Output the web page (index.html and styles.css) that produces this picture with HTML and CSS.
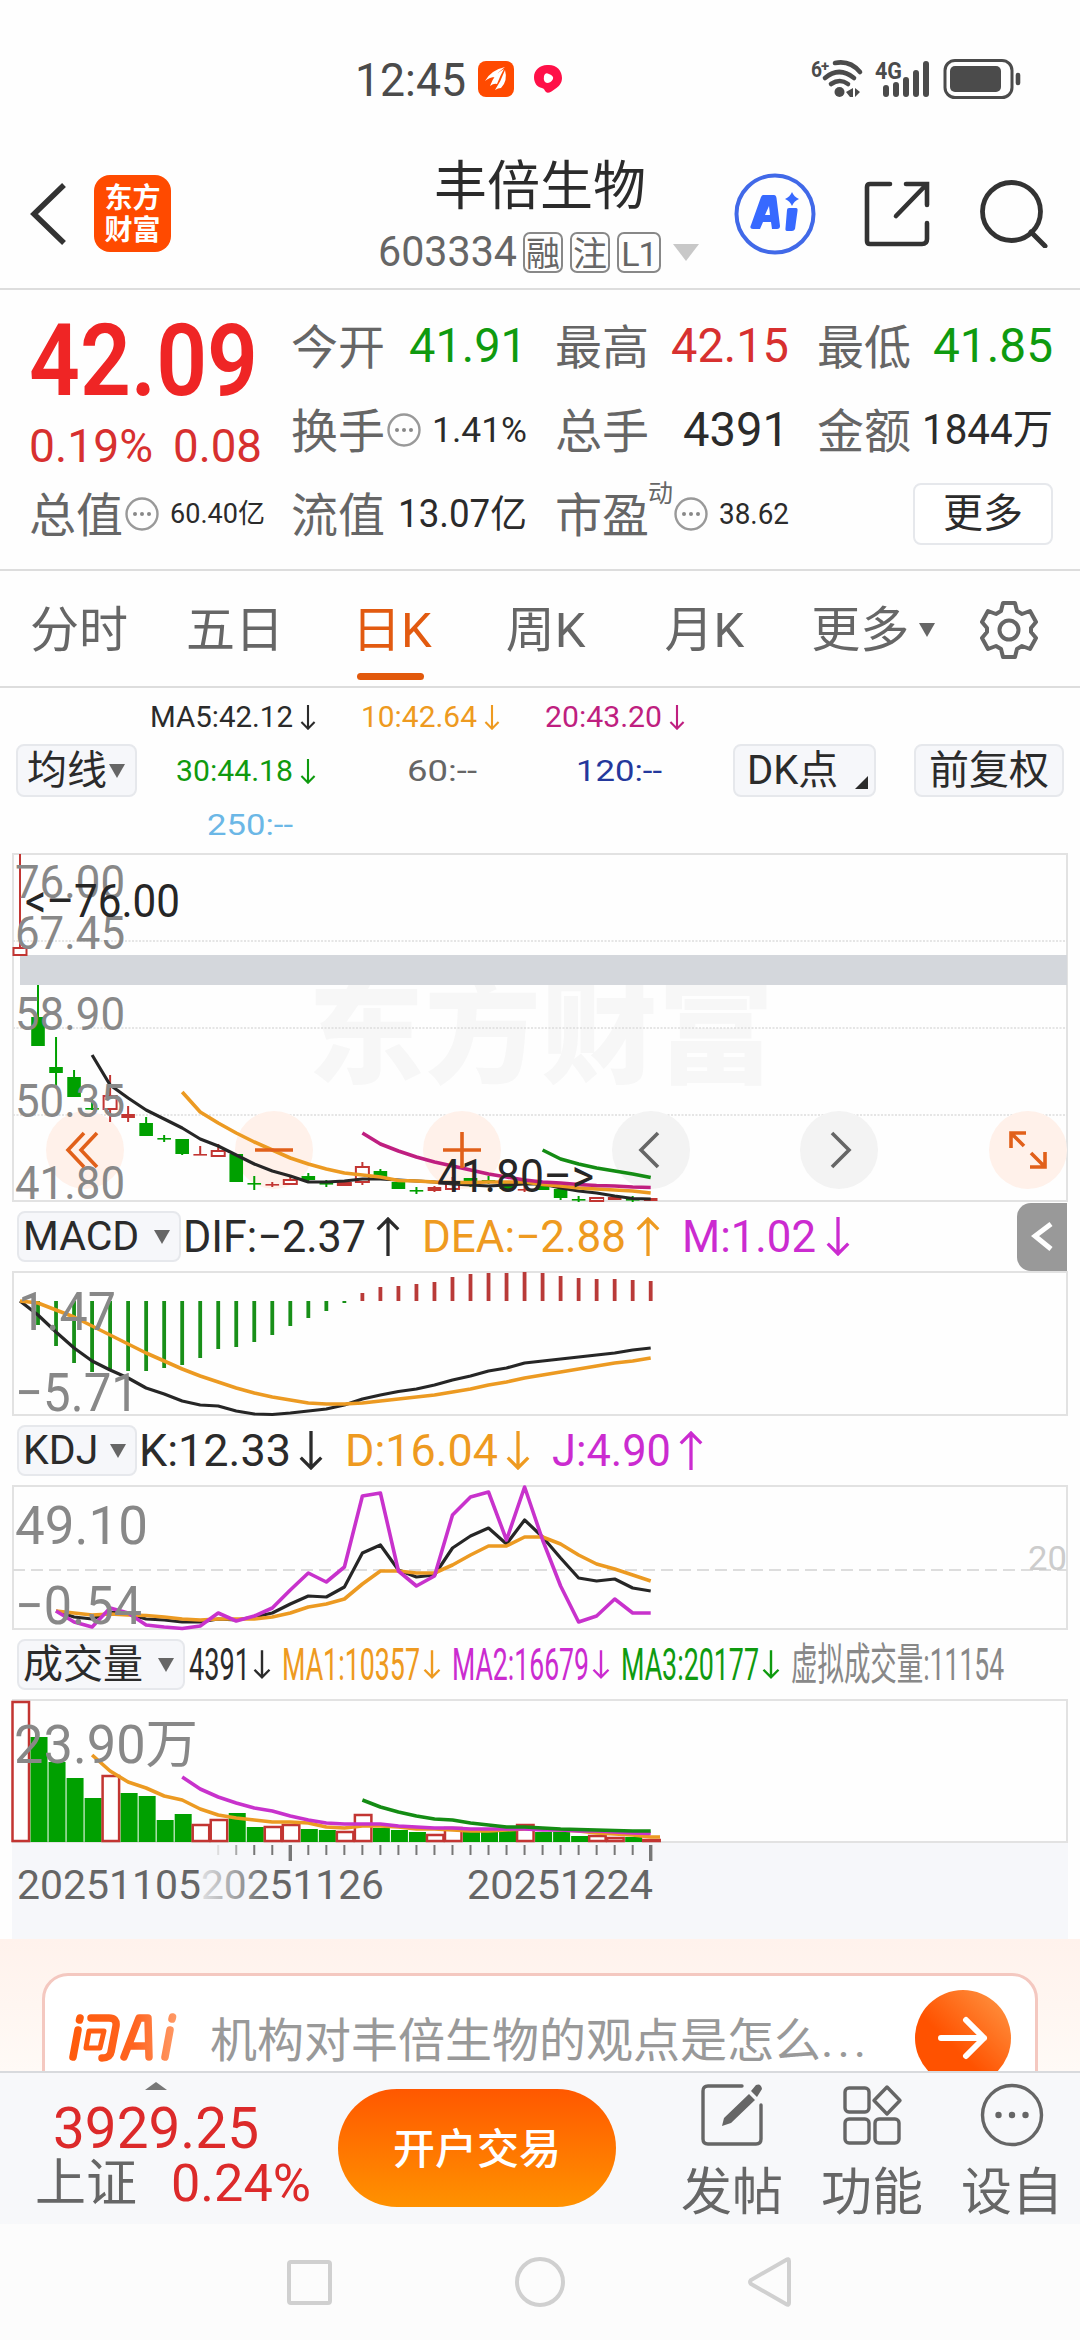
FILE: index.html
```html
<!DOCTYPE html>
<html lang="zh-CN">
<head>
<meta charset="utf-8">
<title>丰倍生物 603334</title>
<link rel="stylesheet" href="styles.css">
</head>
<body>
<svg class="defs" width="0" height="0">
  <symbol id="down" viewBox="0 0 24 38"><path d="M12 0V36M2 26L12 36L22 26" fill="none" stroke="currentColor" stroke-width="3.2"/></symbol>
  <symbol id="up" viewBox="0 0 24 38"><path d="M12 38V2M2 12L12 2L22 12" fill="none" stroke="currentColor" stroke-width="3.2"/></symbol>
  <symbol id="dots" viewBox="0 0 34 34"><circle cx="17" cy="17" r="15.5" fill="none" stroke="#999" stroke-width="2.4"/><circle cx="10" cy="17" r="2" fill="#888"/><circle cx="17" cy="17" r="2" fill="#888"/><circle cx="24" cy="17" r="2" fill="#888"/></symbol>
</svg>

<header class="status">
  <span class="fit clock" data-w="111">12:45</span>
  <svg class="app" width="36" height="36" viewBox="0 0 36 36"><rect width="36" height="36" rx="8" fill="#ff4a00"/><path d="M7 20Q13 9 27 6Q21 10 17 16Q12 16 7 20ZM12 25Q16 13 26 8Q22 15 19 23Q16 22 12 25ZM17 29Q23 20 27 9Q30 20 23 27Q20 27 17 29Z" fill="#fff"/></svg>
  <svg class="pink" width="30" height="30" viewBox="0 0 30 30"><path d="M14 1C23 0 29 6 29 14C29 20 25 23 22 25C18 28 15 30 13 28C11 26 12 25 9 24C4 23 1 19 1 13C1 6 7 1 14 1Z" fill="#ff1048"/><path d="M11 12Q12 8 16 10Q21 12 20 15Q18 19 14 19Q10 18 11 12Z" fill="#fff"/></svg>
  <svg class="system" width="214" height="44" viewBox="810 57 214 44">
    <g fill="none" stroke="#4b4b4b" stroke-linecap="round">
      <path d="M835 63Q850 60 860 72M825 78Q839 66 854 78M831 84Q840 78 848 84" stroke-width="4.6"/>
      <path d="M886 88V94M896 85V94M906 80V94M916 73V94M926 64V94" stroke-width="6"/>
      <rect x="945" y="60.500" width="67" height="37" rx="10" stroke-width="3"/>
      <path d="M1018 75V83" stroke-width="4.600"/>
    </g>
    <circle cx="839.500" cy="92" r="5" fill="#4b4b4b"/><path d="M853 88V97H850L846 92ZM855 88L860 92L855 97Z" fill="#4b4b4b"/>
    <rect x="950" y="66" width="51" height="26" rx="5" fill="#4b4b4b"/>
    <text x="811" y="77" class="sys" font-size="22" textLength="11" lengthAdjust="spacingAndGlyphs">6</text>
    <text x="821" y="71" class="sys" font-size="15">+</text>
    <text x="875" y="79" class="sys" font-size="24" textLength="27" lengthAdjust="spacingAndGlyphs">4G</text>
  </svg>
</header>

<nav class="title-bar">
  <svg class="back" width="38" height="64" viewBox="0 0 38 64"><path d="M34 3L4 32L34 61" fill="none" stroke="#333" stroke-width="5.500"/></svg>
  <div class="brand"><span>东方</span><span>财富</span></div>
  <div class="stock">
    <h1>丰倍生物</h1>
    <div class="code"><span class="fit num" data-w="139">603334</span><i>融</i><i>注</i><i class="l1">L1</i><b class="caret"></b></div>
  </div>
  <svg class="ai" width="82" height="82" viewBox="0 0 82 82"><circle cx="41" cy="41" r="38.500" fill="none" stroke="#4169e8" stroke-width="4"/><path fill-rule="evenodd" d="M29 22H40Q42 22 42.500 25L46 53Q46 56 43 56H38L37 49H29L26 56H19Q15 56 17 52L27 24Q28 22 29 22ZM35 33L31 42H36Z" fill="#3769ff"/><path d="M55 35H62Q64 35 63.500 38L61 56Q60 58 58 58H53Q51 58 51.500 55L53 37Q53 35 55 35ZM58 19Q60 24 65 26Q60 28 58 33Q56 28 51 26Q56 24 58 19Z" fill="#3769ff"/></svg>
  <svg class="share" width="66" height="66" viewBox="0 0 66 66"><path d="M26 3H6Q3 3 3 6V60Q3 63 6 63H58Q63 63 63 58V42M63 24V3H42M62 4L32 35" fill="none" stroke="#333" stroke-width="4.600" stroke-linecap="round"/></svg>
  <svg class="search" width="68" height="68" viewBox="0 0 68 68"><circle cx="31.500" cy="31.500" r="29" fill="none" stroke="#333" stroke-width="4.800"/><path d="M51 52L65 66" stroke="#333" stroke-width="5" stroke-linecap="round"/></svg>
</nav>

<section class="quote">
  <div class="price">
    <div class="fit big num" data-w="229">42.09</div>
    <div class="change num"><span class="fit" data-w="124">0.19%</span><span class="fit" data-w="89">0.08</span></div>
  </div>
  <div class="cell"><label>今开</label><span class="fit num v48 green" data-w="118">41.91</span></div>
  <div class="cell c3"><label>最高</label><span class="fit num v48 red" data-w="118">42.15</span></div>
  <div class="cell c3"><label>最低</label><span class="fit num v48 green" data-w="120">41.85</span></div>
  <div class="cell"><label>换手<svg width="34" height="34"><use href="#dots"/></svg></label><span class="fit num v36" data-w="95">1.41%</span></div>
  <div class="cell c3"><label>总手</label><span class="fit num v48" data-w="106">4391</span></div>
  <div class="cell c3"><label>金额</label><span class="fit num v42" data-w="131">1844万</span></div>
  <div class="cell"><label>总值<svg width="34" height="34"><use href="#dots"/></svg></label><span class="fit num v27" data-w="95">60.40亿</span></div>
  <div class="cell"><label>流值</label><span class="fit num v38" data-w="129">13.07亿</span></div>
  <div class="cell c3"><label>市盈<sup>动</sup><svg width="34" height="34"><use href="#dots"/></svg></label><span class="fit num v28" data-w="70">38.62</span></div>
  <div class="cell end"><button>更多</button></div>
</section>

<nav class="tabs">
  <span>分时</span><span>五日</span><span class="on">日K</span><span>周K</span><span>月K</span><span class="more">更多<b></b></span>
  <svg width="60" height="60" viewBox="0 0 60 60"><path d="M24 3H36L38 11L43 14L51 11L57 22L52 28V32L57 38L51 49L43 46L38 49L36 57H24L22 49L17 46L9 49L3 38L8 32V28L3 22L9 11L17 14L22 11Z" fill="none" stroke="#666" stroke-width="4" stroke-linejoin="round"/><circle cx="30" cy="30" r="9.500" fill="none" stroke="#666" stroke-width="4"/></svg>
</nav>

<section class="ma">
  <button class="pick">均线<b class="tri"></b></button>
  <div class="ma-grid num">
    <span><em class="fit" data-w="143">MA5:42.12</em><svg><use href="#down"/></svg></span>
    <span class="orange"><em class="fit" data-w="116">10:42.64</em><svg><use href="#down"/></svg></span>
    <span class="pinkish"><em class="fit" data-w="117">20:43.20</em><svg><use href="#down"/></svg></span>
    <span class="green"><em class="fit" data-w="117">30:44.18</em><svg><use href="#down"/></svg></span>
    <span class="gray mid"><em class="fit" data-w="70">60:--</em></span>
    <span class="navy mid"><em class="fit" data-w="86">120:--</em></span>
    <span class="sky"><em class="fit" data-w="86">250:--</em></span>
  </div>
  <button class="dk">DK点<b></b></button>
  <button class="adj">前复权</button>
</section>

<main class="charts">
  <svg id="kline" width="1080" height="352" viewBox="0 850 1080 352"></svg>
  <div class="legend">
    <button>MACD<b class="tri"></b></button>
    <span class="item"><em class="fit" data-w="183">DIF:−2.37</em><svg><use href="#up"/></svg></span>
    <span class="item orange"><em class="fit" data-w="204">DEA:−2.88</em><svg><use href="#up"/></svg></span>
    <span class="item violet"><em class="fit" data-w="134">M:1.02</em><svg><use href="#down"/></svg></span>
    <div class="drawer"><svg width="22" height="34" viewBox="0 0 22 34"><path d="M20 4L4 16L20 29" fill="none" stroke="#fff" stroke-width="5"/></svg></div>
  </div>
  <svg id="macd" width="1080" height="146" viewBox="0 1271 1080 146"></svg>
  <div class="legend kdj">
    <button>KDJ<b class="tri"></b></button>
    <span class="item"><em class="fit" data-w="152">K:12.33</em><svg><use href="#down"/></svg></span>
    <span class="item orange"><em class="fit" data-w="153">D:16.04</em><svg><use href="#down"/></svg></span>
    <span class="item violet"><em class="fit" data-w="119">J:4.90</em><svg><use href="#up"/></svg></span>
  </div>
  <svg id="kdj" width="1080" height="146" viewBox="0 1485 1080 146"></svg>
  <div class="legend vol">
    <button>成交量<b class="tri"></b></button>
    <span class="item"><em class="fit" data-w="61">4391</em><svg><use href="#down"/></svg></span>
    <span class="item orange"><em class="fit" data-w="138">MA1:10357</em><svg><use href="#down"/></svg></span>
    <span class="item violet"><em class="fit" data-w="137">MA2:16679</em><svg><use href="#down"/></svg></span>
    <span class="item green"><em class="fit" data-w="138">MA3:20177</em><svg><use href="#down"/></svg></span>
    <span class="item dim"><em class="fit" data-w="213">虚拟成交量:11154</em></span>
  </div>
  <svg id="volume" width="1080" height="240" viewBox="0 1699 1080 240"></svg>
</main>

<section class="ask">
  <div class="ask-card">
    <svg width="112" height="50" viewBox="66 2011 112 50"><defs><linearGradient id="g" gradientUnits="userSpaceOnUse" x1="69" x2="176" y1="0" y2="0"><stop offset="0" stop-color="#ff5a0a"/><stop offset=".6" stop-color="#ff6420"/><stop offset="1" stop-color="#ff9a66"/></linearGradient></defs>
      <g fill="none" stroke="url(#g)" stroke-width="7.500" stroke-linejoin="round" stroke-linecap="round">
        <path d="M79 2017L78.500 2019M77 2029L72 2056M90 2017H108Q116 2017 115 2025L110 2051Q109 2057 101 2057"/>
        <path d="M88 2030H103L99 2047H85Z" stroke-width="5"/>
        <path d="M123 2056L138 2017H147L148 2056M130 2045H147M169 2029L164 2056M171.500 2016L171 2018"/>
      </g></svg>
    <span>机构对丰倍生物的观点是怎么<em>...</em></span>
    <div class="go"><svg width="50" height="44" viewBox="0 0 50 44"><path d="M3 22H46M28 4L46 22L28 40" fill="none" stroke="#fff" stroke-width="6" stroke-linecap="round" stroke-linejoin="round"/></svg></div>
  </div>
</section>

<footer class="dock">
  <div class="index num">
    <b class="peak"></b>
    <div class="fit pts" data-w="206">3929.25</div>
    <div class="idx"><span class="nm">上证</span><span class="fit pct" data-w="140">0.24%</span></div>
  </div>
  <div class="trade">开户交易</div>
  <div class="act"><svg width="64" height="64" viewBox="0 0 64 64"><path d="M42 3H8Q3 3 3 8V56Q3 61 8 61H56Q61 61 61 56V22" fill="none" stroke="#666" stroke-width="3.400" stroke-linecap="round"/><path d="M56 2Q61 0 62 6L57 14L51 8ZM49 11L55 17L31 40L22 43L24 35Z" fill="#666"/></svg>发帖</div>
  <div class="act"><svg width="64" height="64" viewBox="0 0 64 64"><g fill="none" stroke="#666" stroke-width="3.400" stroke-linejoin="round"><rect x="5" y="5" width="24" height="24" rx="4"/><rect x="5" y="36" width="24" height="24" rx="4"/><rect x="35" y="36" width="24" height="24" rx="4"/><path d="M47 4L60 17.500L47 31L34 17.500Z"/></g></svg>功能</div>
  <div class="act"><svg width="64" height="64" viewBox="0 0 64 64"><circle cx="32" cy="32" r="29.500" fill="none" stroke="#666" stroke-width="3.400"/><g fill="#666"><circle cx="18.500" cy="32" r="3.200"/><circle cx="32" cy="32" r="3.200"/><circle cx="45.500" cy="32" r="3.200"/></g></svg>设自</div>
</footer>

<div class="system-nav">
  <svg width="50" height="50" viewBox="0 0 50 50"><rect x="5" y="5" width="41" height="41" rx="2"/></svg>
  <svg width="50" height="50" viewBox="0 0 50 50"><circle cx="25" cy="25" r="23"/></svg>
  <svg width="50" height="50" viewBox="0 0 50 50"><path d="M43 4V46Q43 49 40 47L5 27Q3 25 5 23L40 3Q43 1 43 4Z"/></svg>
</div>
<script src="script.js"></script>
</body>
</html>
```
FILE: styles.css
```css
* { box-sizing: border-box; }
body {
  margin: 0;
  width: 1080px;
  height: 2340px;
  overflow: hidden;
  background: #fefefe;
  color: #2b2b2b;
  font-family: Roboto, "Noto Sans CJK SC", sans-serif;
  line-height: 1;
}
svg { display: block; flex: none; }
button {
  font: inherit;
  color: #2b2b2b;
  background: #f6f7fa;
  border: 2px solid #e6e8ec;
  border-radius: 8px;
  padding: 0;
  display: flex;
  align-items: center;
  white-space: nowrap;
  flex: none;
}
em, i { font-style: normal; }
.defs { position: absolute; }
.fit { display: inline-block; white-space: nowrap; transform-origin: 0 50%; flex: none; }
.green { color: #0f9a0f; }
.red { color: #d7302f; }
.orange { color: #ee9a20; }
.pinkish { color: #bf1f80; }
.gray { color: #666; }
.navy { color: #24389c; }
.sky { color: #6bb7e6; }
.violet { color: #cb2bd0; }
.dim { color: #888; }

.status { height: 130px; padding: 57px 56px 0 355px; display: flex; align-items: flex-start; }
.clock { font-size: 46px; color: #4b4b4b; }
.app { margin: 4px 0 0 12px; }
.pink { margin: 7px 0 0 19px; }
.system { margin-left: auto; }
.sys { fill: #4b4b4b; font-weight: 700; }

.title-bar { height: 160px; border-bottom: 2px solid #ddd; padding-left: 30px; display: flex; align-items: flex-start; }
.back { margin-top: 52px; }
.brand {
  width: 77px; height: 77px; margin: 45px 0 0 26px;
  border-radius: 16px; background: #ff4a00; color: #fff;
  font-size: 28px; font-weight: 700; padding-top: 3px;
  display: flex; flex-direction: column; align-items: center; justify-content: center; gap: 4px;
}
.stock { width: 332px; margin: 31px 0 0 205px; }
.stock h1 { margin: 0 0 0 58px; font-size: 53px; font-weight: 400; white-space: nowrap; }
.code { display: flex; align-items: center; color: #666; font-size: 42px; margin-top: 17px; height: 42px; padding-left: 2px; }
.code i { width: 40px; height: 41px; border: 2px solid #888; border-radius: 7px; font-size: 34px; line-height: 40px; text-align: center; margin-left: 7px; flex: none; }
.code .fit + i { margin-left: 6px; }
.code .l1 { width: 44px; letter-spacing: -1px; }
.caret { border: 13px solid transparent; border-top: 17px solid #c8c8c8; border-bottom: 0; margin-left: 12px; flex: none; }
.ai { margin: 43px 0 0 26px; }
.share { margin: 51px 0 0 48px; }
.search { margin: 50px 0 0 50px; }

.quote {
  height: 281px; padding: 14px 27px 0 29px; border-bottom: 2px solid #ddd;
  display: grid; grid-template-columns: 236px 236px 236px 238px; column-gap: 26px; grid-template-rows: 84px 84px 84px;
  align-items: center;
}
.price { grid-row: span 2; height: 168px; }
.big { font-size: 100px; font-weight: 600; color: #ef2525; margin-top: 7px; }
.change { font-size: 46px; color: #d7302f; display: flex; gap: 20px; margin-top: 12px; }
.cell { display: flex; align-items: center; justify-content: space-between; }
.c3 { padding-left: 2px; }
.cell label { font-size: 47px; color: #666; display: flex; align-items: center; white-space: nowrap; padding-top: 2px; }
.cell sup { font-size: 25px; align-self: flex-start; margin: -11px 0 0 -1px; line-height: 1; }
.cell svg { margin: -2px 0 0 2px; }
.cell sup + svg { margin-left: 1px; }
.cell.end { justify-content: flex-end; }
.cell button { width: 140px; height: 62px; justify-content: center; font-size: 40px; background: #fff; }
.v48 { font-size: 48px; }
.v42 { font-size: 42px; }
.v38 { font-size: 38px; }
.v36 { font-size: 35px; }
.v28 { font-size: 29px; }
.v27 { font-size: 27px; }

.tabs { height: 117px; padding-top: 3px; border-bottom: 2px solid #ddd; display: flex; align-items: center; font-size: 49px; color: #666; padding-left: 30px; white-space: nowrap; }
.tabs span { margin-right: 58px; }
.tabs span:nth-child(2) { margin-right: 68px; }
.tabs .on { color: #e25a10; position: relative; margin-right: 74px; }
.tabs .on::after { content: ""; position: absolute; left: 5px; bottom: -25px; width: 67px; height: 7px; border-radius: 4px; background: #e2590c; }
.tabs span:nth-child(4) { margin-right: 79px; }
.tabs span:nth-child(5) { margin-right: 67px; }
.tabs .more { display: flex; align-items: center; margin-right: 44px; }
.more b { border: 8px solid transparent; border-top: 14px solid #666; border-bottom: 0; margin-left: 10px; }

.ma { height: 162px; display: flex; align-items: flex-start; padding-left: 16px; }
.ma button { margin-top: 56px; height: 53px; font-size: 40px; }
.ma .pick { width: 121px; padding-left: 9px; }
.pick .tri { margin-left: 2px; }
.tri { border: 8px solid transparent; border-top: 14px solid #666; border-bottom: 0; flex: none; }
.ma-grid { width: 560px; margin-left: 11px; padding-top: 2px; font-size: 30px; display: grid; grid-template-columns: 168px 184px 185px; grid-template-rows: 54px 54px 54px; align-items: center; }
.ma-grid span { display: flex; align-items: center; justify-content: flex-end; }
.ma-grid svg { width: 16px; height: 25px; margin-left: 7px; }
.ma-grid .mid { padding-right: 23px; }
.ma-grid .sky { padding-right: 23px; }
.ma .dk { width: 143px; margin-left: 25px; padding-left: 12px; position: relative; }
.dk b { position: absolute; right: 6px; bottom: 6px; border-left: 13px solid transparent; border-bottom: 13px solid #2b2b2b; }
.ma .adj { width: 150px; margin-left: 38px; padding-left: 13px; }

.charts > svg { overflow: hidden; }
.charts text { font-size: 46px; }
.legend { height: 69px; padding: 9px 0 0 17px; display: flex; align-items: flex-start; font-size: 44px; white-space: nowrap; }
.legend button { height: 51px; width: 164px; font-size: 41px; padding: 0 9px 0 4px; justify-content: space-between; }
.legend .item { display: flex; align-items: center; height: 51px; margin-left: 2px; margin-right: 19px; }
.legend .item svg { width: 26px; height: 39px; margin-left: 9px; }
.kdj { padding-top: 8px; height: 68px; }
.kdj button { width: 120px; }
.legend.kdj .item svg { margin-left: 7px; }
.vol { padding-top: 8px; height: 68px; }
.vol button { width: 168px; font-size: 40px; }
.legend.vol .item { margin-left: 4px; margin-right: 7px; }
.legend.vol .item svg { width: 18px; height: 39px; margin-left: 3px; }
.drawer { width: 50px; height: 68px; margin: -8px 13px 0 auto; background: #999; border-radius: 14px 0 0 14px; display: flex; align-items: center; justify-content: center; }

.ask { height: 132px; padding: 34px 42px 0; overflow: hidden; background: linear-gradient(#fff2ec, #fffaf6); }
.ask-card { height: 150px; padding: 0 24px 0 22px; border: 3px solid #f4c8c0; border-radius: 26px; background: #fff; display: flex; align-items: flex-start; }
.ask-card > svg { margin-top: 36px; }
.ask-card span { margin: 41px 0 0 31px; font-size: 47px; color: #999; white-space: nowrap; }
.ask-card span em { letter-spacing: 4px; }
.go { width: 96px; height: 96px; margin: 14px 0 0 auto; border-radius: 50%; background: linear-gradient(45deg, #ff5200 40%, #ff9a48); display: flex; align-items: center; justify-content: center; flex: none; }

.dock { height: 153px; background: #f7f8fa; border-top: 2px solid #d8dadd; display: flex; align-items: flex-start; }
.index { width: 304px; padding-left: 35px; margin-right: 34px; color: #dc2a2a; flex: none; }
.peak { display: block; width: 0; border: 11px solid transparent; border-bottom: 8px solid #777; border-top: 0; margin: 9px 0 0 110px; }
.pts { font-size: 58px; margin: 9px 0 0 18px; }
.idx { display: flex; align-items: center; margin-top: 1px; gap: 34px; white-space: nowrap; }
.nm { font-size: 51px; color: #666; }
.pct { font-size: 51px; }
.trade { width: 278px; height: 118px; margin-top: 16px; padding-top: 3px; border-radius: 59px; background: linear-gradient(#ff5800, #ff9200); color: #fff; font-size: 42px; font-weight: 500; display: flex; align-items: center; justify-content: center; flex: none; }
.act { width: 102px; margin: 10px 0 0 38px; font-size: 51px; color: #666; display: flex; flex-direction: column; align-items: center; gap: 20px; flex: none; white-space: nowrap; }
.trade + .act { margin-left: 65px; }
.system-nav { height: 116px; background: #fcfcfc; display: flex; justify-content: center; gap: 181px; padding-top: 33px; }
.system-nav svg { fill: none; stroke: #d0d0d0; stroke-width: 4; }
```
FILE: script.js
```js
// Squeeze or stretch number labels to their column widths.
document.querySelectorAll('.fit').forEach(el => {
  const target = +el.dataset.w;
  el.style.width = 'max-content';
  const natural = el.getBoundingClientRect().width;
  el.style.transform = `scaleX(${target / natural})`;
  el.style.marginRight = `${target - natural}px`;
});

const GREEN = '#00a000', RED = '#c23532', BLACK = '#262626', ORANGE = '#ec9a22', VIOLET = '#c832cc';
const X = i => 20 + 18.02 * i;
const rect = (x, y, w, h, a) => `<rect x="${x}" y="${y}" width="${w}" height="${h}" ${a}/>`;
const line = (x1, y1, x2, y2, c, w) => `<path d="M${x1} ${y1}L${x2} ${y2}" stroke="${c}" stroke-width="${w}"/>`;
const poly = (pts, c, w = 3.6) => `<polyline points="${pts}" fill="none" stroke="${c}" stroke-width="${w}" stroke-linejoin="round"/>`;
const series = (start, ys) => ys.map((y, k) => `${X(start + k).toFixed(1)},${y}`).join(' ');
const label = (x, y, w, t, c = '#888', s = 46) =>
  `<text x="${x}" y="${y}" textLength="${w}" lengthAdjust="spacingAndGlyphs" fill="${c}" style="font-size:${s}px">${t}</text>`;
const frame = (y, h) => rect(13, y, 1054, h, 'fill="none" stroke="#e2e2e2" stroke-width="2"');

// Daily candles: [high, low, body top, body bottom, style]; g green, h hollow red, r solid red.
const candles = [
  [854, 947, 948, 955, 'h'], [985, 1046, 1017, 1046, 'g'], [1037, 1087, 1067, 1073, 'g'], [1070, 1097, 1077, 1097, 'g'],
  [1098, 1110, 1108, 1109, 'g'], [1075, 1122, 1096, 1109, 'h'], [1106, 1122, 1114, 1118, 'r'], [1117, 1135, 1123, 1136, 'g'],
  [1135, 1142, 1138, 1139, 'g'], [1139, 1155, 1139, 1154, 'g'], [1146, 1155, 1154, 1155, 'r'], [1144, 1156, 1151, 1156, 'h'],
  [1154, 1182, 1154, 1182, 'g'], [1176, 1190, 1183, 1184, 'g'], [1182, 1187, 1184, 1185, 'r'], [1176, 1185, 1180, 1184, 'h'],
  [1173, 1181, 1176, 1180, 'g'], [1180, 1187, 1183, 1184, 'g'], [1180, 1186, 1183, 1185, 'h'], [1162, 1185, 1167, 1182, 'h'],
  [1169, 1178, 1171, 1178, 'g'], [1181, 1189, 1182, 1189, 'g'], [1187, 1194, 1190, 1191, 'g'], [1186, 1192, 1187, 1191, 'r'],
  [1177, 1190, 1182, 1189, 'h'], [1178, 1187, 1178, 1182, 'g'], [1176, 1184, 1180, 1181, 'g'], [1181, 1189, 1182, 1189, 'g'],
  [1172, 1192, 1189, 1190, 'r'], [1181, 1190, 1185, 1190, 'g'], [1189, 1200, 1189, 1198, 'g'], [1196, 1202, 1199, 1200, 'g'],
  [1198, 1200, 1198, 1201, 'h'], [1195, 1200, 1197, 1200, 'r'], [1196, 1202, 1199, 1200, 'g'], [1198, 1201, 1198, 1201, 'r']
];
let k = frame(854, 347);
k += '<text x="308" y="1074" fill="#f7f7f7" textLength="466" style="font-size:116px;font-weight:900">东方财富</text>';
[941, 1028, 1115].forEach(y => k += `<path d="M13 ${y}H1067" stroke="#ddd" stroke-width="1.500" stroke-dasharray="2 1.500"/>`);
k += rect(20, 955, 1047, 30, 'fill="#d4d7dc"');
const disc = (x, c) => `<circle cx="${x}" cy="1150" r="39" fill="${c}"/>`;
k += disc(85, '#fff1ea') + disc(274, '#fff1ea') + disc(462, '#fff1ea') + disc(651, '#f3f3f3') + disc(839, '#f3f3f3') + disc(1028, '#fff1ea');
candles.forEach(([hi, lo, t, b, s], i) => {
  const x = X(i), c = s === 'g' ? GREEN : RED;
  if (s === 'h') {
    k += line(x, hi, x, t, c, 2) + line(x, b, x, Math.max(lo, b), c, 2);
    k += rect(x - 6.5, t, 13, b - t, `fill="#fff" stroke="${c}" stroke-width="2"`);
  } else {
    k += line(x, hi, x, lo, c, 2) + rect(x - 6.8, t, 13.6, Math.max(b - t, 1.6), `fill="${c}"`);
  }
});
k += poly(series(4, [1055, 1085, 1098, 1110, 1119, 1128, 1139, 1146, 1155, 1164, 1171, 1176, 1182, 1182, 1181, 1179, 1179, 1180, 1181, 1182, 1184, 1185, 1186, 1185, 1184, 1184, 1188, 1191, 1193, 1196, 1198.5, 1199]), BLACK, 3.2);
k += poly(series(9, [1092, 1112, 1123, 1133, 1142, 1150, 1158, 1164, 1169, 1173, 1175, 1177, 1180.5, 1181, 1182, 1182.5, 1182.5, 1182, 1182, 1182, 1184.5, 1186, 1188, 1189, 1190, 1191, 1193]), ORANGE);
k += poly(series(19, [1133, 1144, 1151, 1157, 1162, 1166, 1170, 1174, 1177, 1180, 1182, 1183, 1184.5, 1185.5, 1186, 1187, 1187.5]), '#bf1f80');
k += poly(series(29, [1150, 1159, 1164, 1168, 1171, 1174, 1177.5]), '#148c14');
[['76.00', 898], ['67.45', 951], ['58.90', 1034], ['50.35', 1124], ['41.80', 1209]].forEach(([t], n) => {
  const baselines = [898, 951, 1034, 1124, 1209];
  const shown = [898, 949, 1030, 1117, 1199];
  k += label(15, (baselines[n], shown[n]), 110, t);
});
k += label(25, 917, 155, '&lt;–76.00', BLACK) + label(437, 1192, 157, '41.80–&gt;', BLACK);
const stroke = (d, c, w = 3.6) => `<path d="${d}" fill="none" stroke="${c}" stroke-width="${w}"/>`;
k += stroke('M84 1133L68 1150L84 1167M97 1133L81 1150L97 1167M255 1150H293M443 1150H481M462 1132V1168', '#e1601a');
k += stroke('M658 1133L641 1150L658 1167M832 1133L849 1150L832 1167', '#666');
k += stroke('M1011 1148V1133H1026M1011 1133L1024 1146M1045 1152V1167H1030M1045 1167L1031 1153', '#e1601a');
document.getElementById('kline').innerHTML = k;

const hist = [1301, 1325, 1346, 1363, 1372, 1371, 1371, 1371, 1368, 1365, 1358, 1349, 1347, 1342, 1335, 1326, 1318, 1311, 1303,
  1293, 1287, 1286, 1284, 1282, 1277, 1274, 1273, 1273, 1272, 1273, 1276, 1278, 1279, 1279, 1280, 1281];
let m = frame(1272, 143);
hist.forEach((y, i) => m += line(X(i), 1301, X(i), y, y > 1301 ? '#188f18' : '#b93a38', 3.8));
m += poly(series(0, [1301, 1315, 1332, 1348, 1361, 1370, 1378, 1388, 1394, 1401, 1405, 1406, 1411, 1414, 1414.5, 1413, 1411, 1409, 1405, 1399, 1395, 1391.5, 1389, 1385, 1380, 1376, 1371, 1368, 1363, 1361, 1359, 1357, 1355, 1353, 1350, 1348]), BLACK, 3.2);
m += poly(series(0, [1301, 1303, 1310, 1317, 1326, 1335, 1344, 1353, 1361, 1369, 1376, 1382, 1388, 1393, 1397, 1400, 1403, 1404, 1404, 1403, 1401, 1399, 1397, 1395, 1392, 1389, 1385, 1382, 1378, 1375, 1372, 1369, 1366, 1363, 1361, 1358]), ORANGE);
m += label(18, 1330, 98, '1.47', '#888', 53) + label(15, 1411, 124, '−5.71', '#888', 53);
document.getElementById('macd').innerHTML = m;

let j = frame(1486, 143) + '<path d="M13 1570H1067" stroke="#ddd" stroke-width="2" stroke-dasharray="12 6"/>';
j += poly(series(2, [1611, 1617, 1619, 1612, 1614, 1619, 1620, 1622, 1622, 1619, 1620, 1617, 1613, 1604, 1596, 1597, 1587, 1553, 1545, 1570, 1577, 1575, 1548, 1536, 1528, 1544, 1520, 1537, 1558, 1578, 1581, 1579, 1588, 1591]), BLACK, 3.2);
j += poly(series(2, [1611, 1613, 1615, 1614, 1615, 1615.5, 1617, 1619, 1620, 1619, 1619, 1619, 1617, 1613, 1607, 1604, 1599, 1584, 1571, 1571, 1573, 1573, 1565, 1555, 1546, 1546, 1537, 1537, 1544, 1555, 1564, 1569, 1575, 1581]), ORANGE);
j += poly(series(2, [1611, 1622, 1627, 1608, 1613, 1625, 1627, 1628.5, 1626, 1613, 1621, 1616, 1608, 1590, 1573, 1582, 1567, 1496, 1493, 1571, 1586, 1576, 1515, 1497, 1492, 1540, 1487, 1540, 1586, 1622, 1616, 1599, 1613, 1613]), VIOLET);
j += label(15, 1544, 133, '49.10', '#888', 53) + label(15, 1624, 127, '−0.54', '#888', 53) + label(1028, 1570, 39, '20', '#ccc', 34);
document.getElementById('kdj').innerHTML = j;

const vols = [1701, 1737, 1762, 1778, 1798, 1775, 1793, 1796, 1820, 1814, 1824, 1819, 1813, 1827, 1826, 1824, 1829, 1830, 1831, 1814,
  1828, 1830, 1832, 1834, 1827, 1832, 1832, 1831, 1824, 1832, 1832, 1836, 1835, 1837, 1837, 1839];
const rising = [0, 5, 10, 11, 14, 15, 18, 19, 23, 24, 28, 32, 33, 35];
let v = rect(12, 1843, 1056, 96, 'fill="#f6f7fa"') + frame(1700, 142);
vols.forEach((y, i) => {
  v += rising.includes(i)
    ? rect(X(i) - 7.5, y + 1, 16.5, 1841 - y - 1, `fill="#fff" stroke="${RED}" stroke-width="2.500"`)
    : rect(X(i) - 7.5, y, 17, 1842 - y, `fill="${GREEN}"`);
});
v += poly(series(4, [1755, 1771, 1782, 1788, 1796, 1800, 1809, 1815, 1818, 1820, 1822, 1822, 1823, 1827, 1828, 1826, 1826, 1827, 1829, 1829, 1830, 1831, 1831, 1830, 1829, 1829, 1830, 1831, 1833, 1834, 1835, 1837]) + ' 660,1837', ORANGE);
v += poly(series(9, [1777, 1789, 1797, 1803, 1808, 1811, 1816, 1820, 1823, 1824, 1824, 1824, 1826, 1827, 1828, 1828, 1829, 1829, 1829, 1829, 1830, 1830, 1831, 1831, 1832, 1833, 1833.5]), VIOLET);
v += poly(series(19, [1800, 1807, 1812, 1816, 1819, 1820, 1823, 1825, 1827, 1827, 1828, 1829, 1829.5, 1830, 1830.5, 1831, 1831]), '#148c14');
v += label(14, 1763, 184, '23.90万', '#888', 53);
for (let i = 11; i <= 35; i++) {
  const big = i === 15 || i === 35;
  v += line(X(i), 1845, X(i), big ? 1861 : 1855, i < 12 ? '#ddd' : i < 13 ? '#aaa' : '#777', big ? 3.4 : 2);
}
v += '<defs><linearGradient id="fade" gradientUnits="userSpaceOnUse" x1="200" x2="270" y1="0" y2="0"><stop offset="0" stop-color="#666" stop-opacity=".15"/><stop offset="1" stop-color="#666"/></linearGradient></defs>';
v += label(17, 1899, 184, '20251105', '#666', 41) + label(201, 1899, 183, '20251126', 'url(#fade)', 41) + label(467, 1899, 186, '20251224', '#666', 41);
document.getElementById('volume').innerHTML = v;
```
